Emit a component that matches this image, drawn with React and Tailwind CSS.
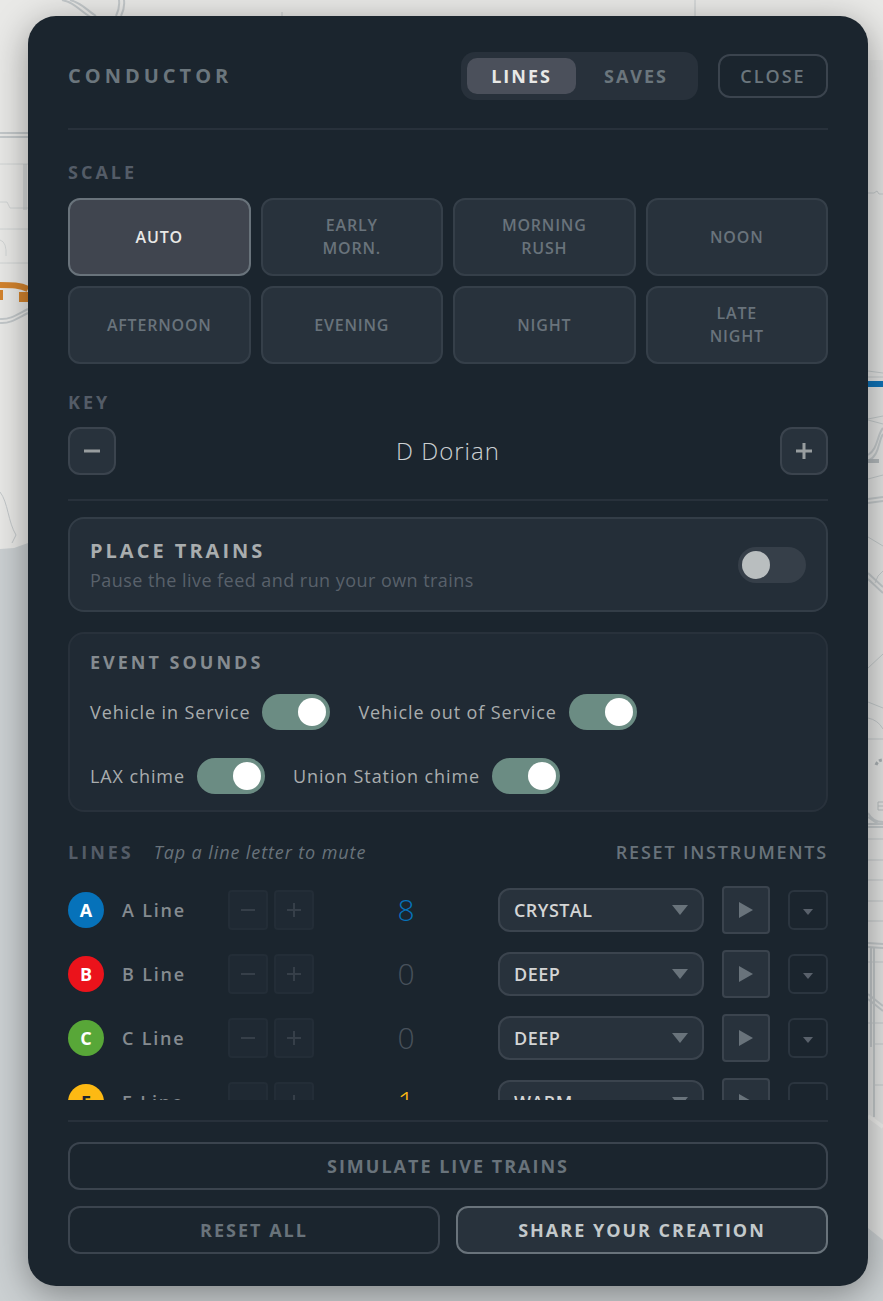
import React, { useState } from 'react'

const scales = ["Auto", "Early\nMorn.", "Morning\nRush", "Noon", "Afternoon", "Evening", "Night", "Late\nNight"]

const keys = ["C Dorian", "D Dorian", "E Dorian", "F Dorian", "G Dorian", "A Dorian"]

const sounds = [
    { id: "in-service", label: "Vehicle in Service" },
    { id: "out-of-service", label: "Vehicle out of Service" },
    { id: "lax", label: "LAX chime" },
    { id: "union", label: "Union Station chime" },
]

const instruments = ["Crystal", "Deep", "Warm"]

const lines = [
    { letter: "A", count: 8, voice: "Crystal", badge: "bg-[#0672ba] text-white", number: "text-[#0672ba]" },
    { letter: "B", count: 0, voice: "Deep", badge: "bg-[#eb131b] text-white", number: "text-[#48515b]" },
    { letter: "C", count: 0, voice: "Deep", badge: "bg-[#58a738] text-white", number: "text-[#48515b]" },
    { letter: "E", count: 1, voice: "Warm", badge: "bg-[#fdb913] text-[#1c2530]", number: "text-[#fdb913]" },
]

export default function App() {
    const [tab, setTab] = useState("Lines")
    const [scale, setScale] = useState("Auto")
    const [keyIndex, setKeyIndex] = useState(1)

    const shiftKey = (step) => setKeyIndex((keyIndex + step + keys.length) % keys.length)

    return (
        <div className="relative flex h-screen w-full overflow-hidden bg-[#e9e9e7] pt-4 pr-[15px] pb-[15px] pl-7 font-['Open_Sans',sans-serif]">
            <CityMap />
            <main className="relative flex min-w-0 flex-1 flex-col rounded-[28px] bg-[#1b252e] px-10 pt-9 pb-8 shadow-[0_8px_36px_rgba(0,0,0,0.38)]">
                <header className="flex items-center border-b-2 border-[#28313b] pb-7">
                    <h1 className="flex-1 text-xl font-bold tracking-[4px] text-[#6b767d]">CONDUCTOR</h1>
                    <div className="mr-5 flex gap-1 rounded-[14px] bg-[#28313b] p-[6px]">
                        {["Lines", "Saves"].map((name) => (
                            <button
                                key={name}
                                type="button"
                                onClick={() => setTab(name)}
                                className={`h-9 rounded-[10px] px-6 text-lg font-bold tracking-[2px] uppercase ${tab === name ? "bg-[#4b505b] text-[#e8e8e6]" : "text-[#6b767d]"}`}>
                                {name}
                            </button>
                        ))}
                    </div>
                    <button type="button" className="h-11 min-w-[110px] rounded-xl border-2 border-[#3b444e] px-5 text-lg font-semibold tracking-[2px] text-[#6b767d]">
                        CLOSE
                    </button>
                </header>

                <div className="min-h-0 flex-1 overflow-y-auto pt-[30px] [scrollbar-width:none]">
                    <SectionLabel>SCALE</SectionLabel>
                    <div className="mt-[14px] grid grid-cols-4 gap-[10px]">
                        {scales.map((name) => (
                            <button
                                key={name}
                                type="button"
                                onClick={() => setScale(name)}
                                className={`min-h-[78px] rounded-xl border-2 px-2 text-base leading-[23px] font-semibold tracking-wider whitespace-pre-line uppercase ${scale === name ? "border-[#69737b] bg-[#40454f] text-[#e8e8e6]" : "border-[#353f49] bg-[#28323c] text-[#69737b]"}`}>
                                {name}
                            </button>
                        ))}
                    </div>

                    <div className="mt-[26px]">
                        <SectionLabel>KEY</SectionLabel>
                    </div>
                    <div className="mt-[13px] flex items-center justify-between border-b-2 border-[#28313b] pb-6">
                        <KeyButton label="Key down" onClick={() => shiftKey(-1)}>
                            <path d="M2 10h16" />
                        </KeyButton>
                        <output className="text-2xl font-light tracking-[1px] text-[#ccd1d3]">{keys[keyIndex]}</output>
                        <KeyButton label="Key up" onClick={() => shiftKey(1)}>
                            <path d="M2 10h16M10 2v16" />
                        </KeyButton>
                    </div>

                    <section className="mt-4 flex items-center justify-between rounded-2xl border-2 border-[#333d47] bg-[#242e38] px-5 py-[18px]">
                        <label htmlFor="place-trains">
                            <span className="block text-xl leading-7 font-bold tracking-[3px] text-[#a9adae]">PLACE TRAINS</span>
                            <span className="mt-[3px] block text-lg leading-6 tracking-wide text-[#59616b]">Pause the live feed and run your own trains</span>
                        </label>
                        <Toggle id="place-trains" />
                    </section>

                    <section className="mt-5 rounded-2xl border-2 border-[#28313b] bg-[#202a34] px-5 py-4">
                        <h2 className="text-lg leading-6 font-bold tracking-[3px] text-[#858b90]">EVENT SOUNDS</h2>
                        <div className="mt-5 flex flex-wrap gap-7">
                            {sounds.map((sound) => (
                                <div key={sound.id} className="flex items-center gap-3">
                                    <label htmlFor={sound.id} className="text-lg font-medium tracking-wider text-[#a9adae]">{sound.label}</label>
                                    <Toggle id={sound.id} defaultChecked />
                                </div>
                            ))}
                        </div>
                    </section>

                    <div className="mt-7 mb-[22px] flex items-center">
                        <SectionLabel>LINES</SectionLabel>
                        <p className="ml-5 flex-1 text-lg leading-6 tracking-wider text-[#69737b] italic">Tap a line letter to mute</p>
                        <button type="button" className="text-lg leading-6 font-semibold tracking-widest text-[#69737b]">RESET INSTRUMENTS</button>
                    </div>
                    <ul className="flex flex-col gap-4">
                        {lines.map((line) => <LineRow key={line.letter} line={line} />)}
                    </ul>
                </div>

                <footer className="mt-5 grid grid-cols-2 gap-4 border-t-2 border-[#28313b] pt-5 text-lg font-bold tracking-[2px] text-[#69737b]">
                    <button type="button" className="col-span-2 h-12 rounded-xl border-2 border-[#3b444e]">SIMULATE LIVE TRAINS</button>
                    <button type="button" className="h-12 rounded-xl border-2 border-[#3b444e]">RESET ALL</button>
                    <button type="button" className="h-12 rounded-xl border-2 border-[#69737b] bg-[#28323c] text-[#c3c9cb]">SHARE YOUR CREATION</button>
                </footer>
            </main>
        </div>
    )
}

const SectionLabel = ({ children }) => (
    <h2 className="text-lg leading-6 font-bold tracking-[3px] text-[#545c67]">{children}</h2>
)

const KeyButton = ({ label, onClick, children }) => (
    <button type="button" aria-label={label} onClick={onClick} className="flex size-12 items-center justify-center rounded-xl border-2 border-[#3b444e] bg-[#28323c] text-[#989d9f]">
        <svg className="size-5" viewBox="0 0 20 20" fill="none" stroke="currentColor" strokeWidth="3" strokeLinecap="butt">{children}</svg>
    </button>
)

const Toggle = ({ id, defaultChecked }) => (
    <input
        id={id}
        type="checkbox"
        role="switch"
        defaultChecked={defaultChecked}
        className="h-9 w-[68px] shrink-0 appearance-none rounded-full bg-[#363f49] p-1 before:block before:size-7 before:rounded-full before:bg-[#b9bebf] checked:bg-[#6b8c83] checked:before:translate-x-8 checked:before:bg-white"
    />
)

function LineRow({ line }) {
    const [muted, setMuted] = useState(false)
    const name = `${line.letter} Line`

    return (
        <li className="flex h-12 items-center gap-[18px]">
            <button
                type="button"
                aria-pressed={muted}
                onClick={() => setMuted(!muted)}
                className={`size-9 shrink-0 rounded-full text-lg font-bold ${line.badge} ${muted ? "opacity-40" : ""}`}>
                {line.letter}
            </button>
            <span className="w-[88px] shrink-0 text-lg font-semibold tracking-widest text-[#858b90]">{name}</span>
            <div className="flex gap-[6px]">
                <StepButton label={`Remove a train from ${name}`}>
                    <path d="M3 10h14" />
                </StepButton>
                <StepButton label={`Add a train to ${name}`}>
                    <path d="M3 10h14M10 3v14" />
                </StepButton>
            </div>
            <span className={`flex-1 text-center text-3xl font-light ${line.number}`}>{line.count}</span>
            <div className="relative w-[206px] shrink-0">
                <select
                    aria-label={`${name} instrument`}
                    defaultValue={line.voice}
                    className="h-11 w-full appearance-none rounded-xl border-2 border-[#3b444e] bg-[#28323c] pr-10 pl-[14px] text-lg font-semibold tracking-wide text-[#d4d5d5] uppercase">
                    {instruments.map((voice) => <option key={voice}>{voice}</option>)}
                </select>
                <svg className="pointer-events-none absolute top-[17px] right-4 h-[10px] w-4 text-[#69737b]" viewBox="0 0 16 10" fill="currentColor">
                    <path d="M0 0h16L8 10z" />
                </svg>
            </div>
            <button type="button" aria-label={`Play ${name}`} className="flex size-12 shrink-0 items-center justify-center rounded border-2 border-[#3b444e] bg-[#28323c] text-[#69737b]">
                <svg className="h-4 w-[14px]" viewBox="0 0 14 16" fill="currentColor"><path d="M0 0l14 8-14 8z" /></svg>
            </button>
            <button type="button" aria-label={`${name} options`} className="flex size-10 shrink-0 items-center justify-center rounded-md border-2 border-[#2b353f] pt-1 text-[#59616b]">
                <svg className="h-[6px] w-[10px]" viewBox="0 0 10 6" fill="currentColor"><path d="M0 0h10L5 6z" /></svg>
            </button>
        </li>
    )
}

const StepButton = ({ label, children }) => (
    <button type="button" aria-label={label} disabled className="flex size-10 items-center justify-center rounded border-2 border-[#232d37] bg-[#1f2933] text-[#363f49]">
        <svg className="size-5" viewBox="0 0 20 20" fill="none" stroke="currentColor" strokeWidth="2">{children}</svg>
    </button>
)

// Street map behind the panel, seen only round its edges
const CityMap = () => (
    <svg className="absolute inset-0 h-full w-full" viewBox="0 0 883 1301" preserveAspectRatio="none" fill="none" aria-hidden="true">
        <path d="M0 0h883v1301H0z" fill="#e9e9e7" />
        <path d="M440 0h443v1301H440z" fill="#e2e3e2" />
        <path d="M440 0h443v60H440z" fill="#e9e9e7" />
        <path d="M0 549l14-1 14-5h30v700h810v-15l15 12v61H0z" fill="#cbd0d2" />
        <g stroke="#c3c8ca">
            <path d="M62 0c14 3 16 10 30 18M70 0c12 3 15 9 26 16M119 0c1 8-1 12-3 16M124 0c1 8-1 12-3 16" strokeWidth="2" />
            <path d="M282 12v4M695 0v16M24 164v46M26 164v46" />
            <path d="M0 133h28M0 137h28" strokeWidth="2" />
            <path d="M0 164h28M0 202h7l3 6h18M0 229h28M0 263h28M0 240q7 2 6 16" strokeOpacity="0.6" />
            <path d="M0 319c10 1 18-5 28-10M0 323c10 1 18-5 28-10" strokeWidth="2" />
            <path d="M0 492c8 10 8 30 16 43l-4 8" />
            <path d="M868 193h6l3-2 2 3h4M868 371l15 2M868 377h15M868 419l15-3M868 420l15 4M868 479l15-4M868 537l15 9" />
            <path d="M868 455c10-6 9-20 15-27M868 461c12-6 10-20 15-27M868 499l15-2M868 503l15-2M868 573l15 14M868 579l15 14" strokeWidth="2" />
            <path d="M875 583q2-8 8-12M883 654l-15 14M868 702l15 6M868 718q10 2 15 11M868 739h15" />
            <path d="M868 813c4 8 10 9 15 9M868 824h15M868 827h15M868 817l10 7" strokeWidth="2" />
            <path d="M868 839h15M868 860h15M868 880h15M868 901h15M868 921h15M868 962h15M868 1023h15M873 1044h10M873 1085h10" />
            <path d="M868 943l15 1M868 947l15 1M871 947v100M874 947v170M868 994l15 12M868 999l15 12" strokeWidth="2" />
        </g>
        <path d="M868 1116l15 11" stroke="#ededeb" strokeWidth="4" />
        <path d="M868 459h11v4h-11z" fill="#b2b8bb" />
        <path d="M0 285c12 0 20 0 28 4" stroke="#d3832d" strokeWidth="6" />
        <path d="M0 290h3v10H0zM19 292h9v10h-9z" fill="#d3832d" />
        <path d="M868 384h15" stroke="#0f72b6" strokeWidth="6" />
        <path d="M876 765q2-5 7-5" stroke="#a9afb2" strokeWidth="3" strokeDasharray="3 2" />
        <path d="M883 802h-5v8h5M878 806h5" stroke="#b9bec0" strokeWidth="1" />
    </svg>
)
